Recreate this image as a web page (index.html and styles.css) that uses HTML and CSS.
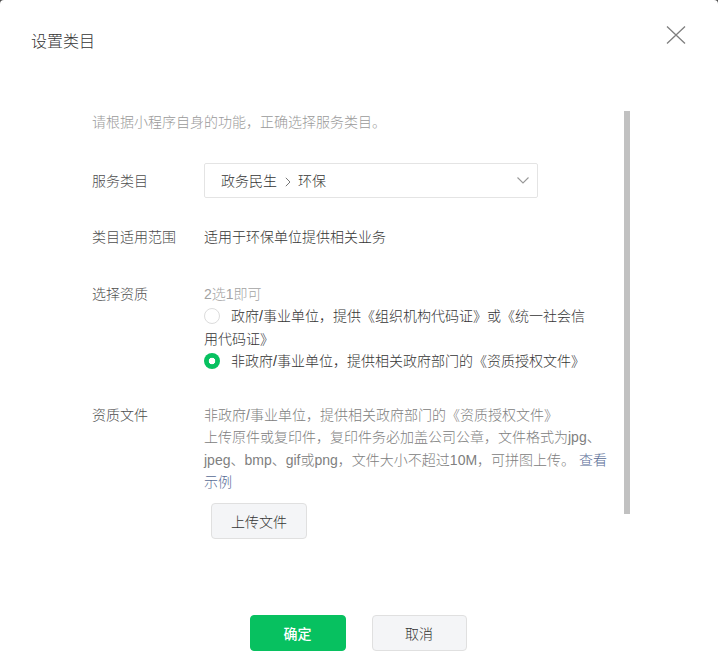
FILE: index.html
```html
<!DOCTYPE html>
<html lang="zh-CN">
<head>
    <meta charset="UTF-8">
    <meta name="viewport" content="width=device-width, initial-scale=1.0">
    <title>设置类目</title>
    <link rel="stylesheet" href="styles.css">
</head>
<body>
    <div class="dialog">
        <div class="dialog-hd">
            <h3 class="dialog-title">设置类目</h3>
            <button class="dialog-close" type="button" aria-label="关闭">
                <svg width="20" height="18" viewBox="0 0 20 18">
                    <path d="M1 0.5 L19 17.5 M19 0.5 L1 17.5" stroke="#7f7f7f" stroke-width="1.3" fill="none"/>
                </svg>
            </button>
        </div>

        <div class="dialog-bd">
            <div class="dialog-content">
                <p class="tips">请根据小程序自身的功能，正确选择服务类目。</p>

                <div class="form-item">
                    <label class="form-label form-label-select">服务类目</label>
                    <div class="form-control">
                        <div class="select">
                            <span class="select-value">政务民生
                                <svg class="select-sep" width="6" height="10" viewBox="0 0 6 10">
                                    <path d="M0.8 0.8 L5 5 L0.8 9.2" stroke="#777" stroke-width="1" fill="none"/>
                                </svg>
                                环保</span>
                            <svg class="select-arrow" width="12" height="7" viewBox="0 0 12 7">
                                <path d="M0.5 0.5 L6 6 L11.5 0.5" stroke="#999" stroke-width="1.1" fill="none"/>
                            </svg>
                        </div>
                    </div>
                </div>

                <div class="form-item form-item-scope">
                    <label class="form-label">类目适用范围</label>
                    <div class="form-control">适用于环保单位提供相关业务</div>
                </div>

                <div class="form-item form-item-qualify">
                    <label class="form-label">选择资质</label>
                    <div class="form-control">
                        <p class="form-desc">2选1即可</p>
                        <div class="radio-group">
                            <label class="radio"><span class="radio-icon"></span>政府/事业单位，提供《组织机构代码证》或《统一社会信用代码证》</label>
                            <label class="radio radio-checked"><span class="radio-icon"></span>非政府/事业单位，提供相关政府部门的《资质授权文件》</label>
                        </div>
                    </div>
                </div>

                <div class="form-item form-item-file">
                    <label class="form-label">资质文件</label>
                    <div class="form-control">
                        <p class="file-desc">非政府/事业单位，提供相关政府部门的《资质授权文件》<br>上传原件或复印件，复印件务必加盖公司公章，文件格式为jpg、jpeg、bmp、gif或png，文件大小不超过10M，可拼图上传。 <a class="link" href="#">查看示例</a></p>
                        <button class="btn btn-default btn-upload" type="button">上传文件</button>
                    </div>
                </div>
            </div>
            <div class="scrollbar"><div class="scrollbar-thumb"></div></div>
        </div>

        <div class="dialog-ft">
            <button class="btn btn-primary" type="button">确定</button>
            <button class="btn btn-default" type="button">取消</button>
        </div>
    </div>
</body>
</html>
```

FILE: styles.css
```css
html {
    background: #4c4c4c;
}
body {
    margin: 0;
    font-family: "Liberation Sans", "Noto Sans CJK SC", sans-serif;
    font-size: 14px;
    font-weight: 300;
    color: #353535;
}
p {
    margin: 0;
}
.dialog {
    width: 718px;
    height: 100vh;
    background: #fff;
    border-radius: 4px 4px 0 0;
    overflow: hidden;
}
.dialog-hd {
    display: flex;
    justify-content: space-between;
    align-items: flex-start;
    height: 111px;
    box-sizing: border-box;
    padding: 26px 31px 0 31px;
}
.dialog-title {
    margin: 4px 0 0;
    font-size: 16px;
    font-weight: 300;
    line-height: 24px;
    color: #353535;
}
.dialog-close {
    padding: 0;
    border: none;
    background: none;
    width: 20px;
    height: 18px;
    margin-right: 1px;
    cursor: pointer;
}
.dialog-close svg {
    display: block;
}
.dialog-bd {
    display: flex;
    height: 460px;
    padding-left: 92px;
}
.dialog-content {
    width: 522px;
    margin-right: 10px;
}
.scrollbar {
    width: 6px;
}
.scrollbar-thumb {
    height: 403px;
    background: #c1c1c1;
}
.tips {
    line-height: 22px;
    color: #9a9a9a;
}
.form-item {
    display: flex;
    line-height: 22.5px;
    margin-top: 30px;
}
.form-item-scope {
    margin-top: 28px;
}
.form-item-qualify {
    margin-top: 34px;
}
.form-item-file {
    margin-top: 31px;
}
.form-label {
    width: 112px;
    flex-shrink: 0;
    color: #4d4d4d;
}
.form-label-select {
    padding-top: 7px;
}
.form-control {
    width: 411px;
}
.select {
    display: flex;
    align-items: center;
    justify-content: space-between;
    height: 35px;
    box-sizing: border-box;
    width: 334px;
    padding: 0 8px 0 16px;
    border: 1px solid #e4e4e4;
    border-radius: 2px;
}
.select-value {
    display: flex;
    align-items: center;
    padding-top: 2px;
}
.select-sep {
    margin: 0 7px 0 8px;
}
.select-arrow {
    display: block;
}
.form-desc {
    color: #a3a3a3;
}
.radio-group {
    max-width: 390px;
}
.radio {
    display: block;
}
.radio-icon {
    display: inline-block;
    box-sizing: border-box;
    width: 16px;
    height: 16px;
    margin-right: 11px;
    border: 1px solid #dcdcdc;
    border-radius: 50%;
    vertical-align: -3px;
}
.radio-checked .radio-icon {
    border: none;
    background: radial-gradient(circle, #fff 0, #fff 3px, #07c160 3.6px);
}
.file-desc {
    color: #808080;
}
.link {
    color: #576b95;
    text-decoration: none;
}
.btn {
    height: 36px;
    box-sizing: border-box;
    border-radius: 4px;
    font-family: inherit;
    font-size: 14px;
    font-weight: 300;
    cursor: pointer;
}
.btn-default {
    background: #f4f5f7;
    border: 1px solid #e0e0e0;
    color: #353535;
}
.btn-primary {
    background: #07c160;
    border: 1px solid #07c160;
    color: #fff;
    font-weight: 500;
}
.btn-upload {
    display: block;
    width: 96px;
    height: 36px;
    margin: 9px 0 0 7px;
}
.dialog-ft {
    display: flex;
    justify-content: center;
    gap: 26px;
    padding: 44px 2px 0 0;
}
.dialog-ft .btn {
    width: 96px;
}
.dialog-ft .btn-default {
    width: 95px;
}
```
